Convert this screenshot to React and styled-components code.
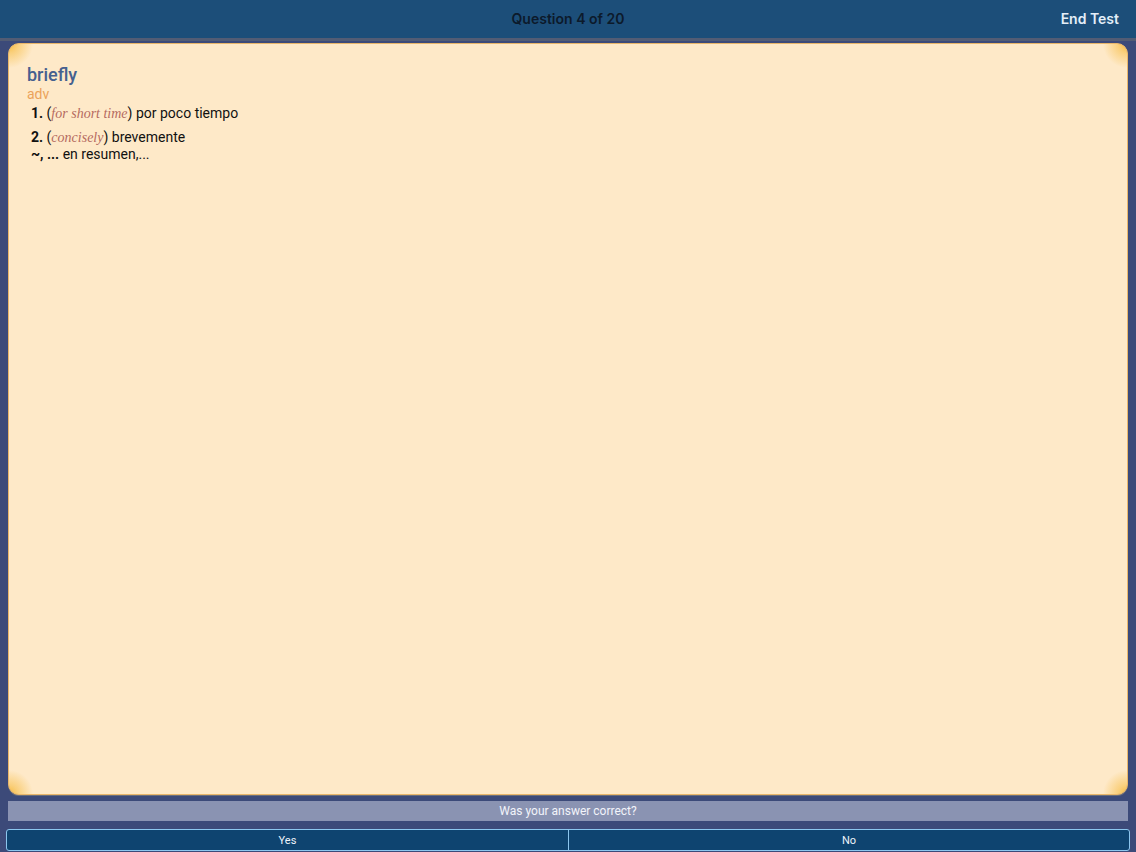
import React from "react";
import styled, { createGlobalStyle } from "styled-components";

const Global = createGlobalStyle`
  *, *::before, *::after { box-sizing: border-box; }
  html, body { margin: 0; padding: 0; }
  body { background: #3c4a79; font-family: "Roboto", "Liberation Sans", sans-serif; }
  #root { height: 852px; }
`;

const Page = styled.div`
  height: 852px;
  display: flex;
  flex-direction: column;
  background: #3c4a79;
`;

const Header = styled.header`
  height: 41px;
  flex: none;
  background: #1c4e79;
  border-bottom: 3px solid #525c74;
  display: grid;
  grid-template-columns: 1fr auto 1fr;
  align-items: center;
  padding: 0 17px 1px;
  font-family: "Inter", "Liberation Sans", sans-serif;
`;

const Title = styled.div`
  grid-column: 2;
  font-size: 14px;
  font-weight: 600;
  color: #0c1a2b;
`;

const HeaderButton = styled.div`
  grid-column: 3;
  justify-self: end;
  font-size: 14px;
  font-weight: 600;
  color: #e4eef8;
`;

const Main = styled.main`
  flex: 1;
  display: flex;
  flex-direction: column;
  padding: 2px 8px 0;
`;

const glow = (pos) =>
  `radial-gradient(circle at ${pos}, #f6bb3f 0, rgba(246,187,63,0.55) 9px, rgba(254,233,199,0) 24px)`;

const Card = styled.section`
  flex: 1;
  border-radius: 11px;
  border: 1px solid #e9b66a;
  background: ${glow("0 0")}, ${glow("100% 0")}, ${glow("0 100%")}, ${glow("100% 100%")}, #fee9c8;
  padding: 20px 18px;
  box-shadow: 0 1px 0 #6b6f7c;
`;

const Headword = styled.div`
  font-size: 18px;
  font-weight: 500;
  color: #45608f;
  line-height: 22px;
`;

const Pos = styled.div`
  font-size: 14px;
  color: #eba35a;
  line-height: 16px;
`;

const Sense = styled.div`
  font-size: 14px;
  color: #111;
  line-height: 17px;
  padding-left: 4px;
  margin-top: ${(p) => p.$mt || 0}px;
`;

const Num = styled.span`
  font-weight: 700;
`;

const Gloss = styled.i`
  font-family: "Liberation Serif", "DejaVu Serif", serif;
  font-size: 14px;
  color: #b5695f;
`;

const Phrase = styled.span`
  font-weight: 700;
`;

const Prompt = styled.div`
  margin-top: 6px;
  height: 20px;
  flex: none;
  background: #8a93b2;
  color: #f2f4fa;
  font-size: 12px;
  display: flex;
  align-items: center;
  justify-content: center;
`;

const ButtonRow = styled.div`
  display: grid;
  grid-template-columns: 561px 1fr;
  margin: 8px -2px 1px;
  height: 22px;
  flex: none;
  border: 1px solid #8cc6ee;
  border-radius: 3px;
  overflow: hidden;
  background: #0e4470;
`;

const Choice = styled.button`
  border: none;
  border-left: ${(p) => (p.$divider ? "1px solid #8cc6ee" : "none")};
  background: transparent;
  color: #eef4fb;
  font-family: "Roboto", "Liberation Sans", sans-serif;
  font-size: 11px;
  padding: 0;
  cursor: pointer;
`;

export default function App() {
  return (
    <Page>
      <Global />
      <Header>
        <Title>Question 4 of 20</Title>
        <HeaderButton>End Test</HeaderButton>
      </Header>
      <Main>
        <Card>
          <Headword>briefly</Headword>
          <Pos>adv</Pos>
          <Sense $mt={3}>
            <Num>1.</Num> (<Gloss>for short time</Gloss>) por poco tiempo
          </Sense>
          <Sense $mt={7}>
            <Num>2.</Num> (<Gloss>concisely</Gloss>) brevemente
          </Sense>
          <Sense>
            <Phrase>~, ...</Phrase> en resumen,...
          </Sense>
        </Card>
        <Prompt>Was your answer correct?</Prompt>
        <ButtonRow>
          <Choice>Yes</Choice>
          <Choice $divider>No</Choice>
        </ButtonRow>
      </Main>
    </Page>
  );
}
